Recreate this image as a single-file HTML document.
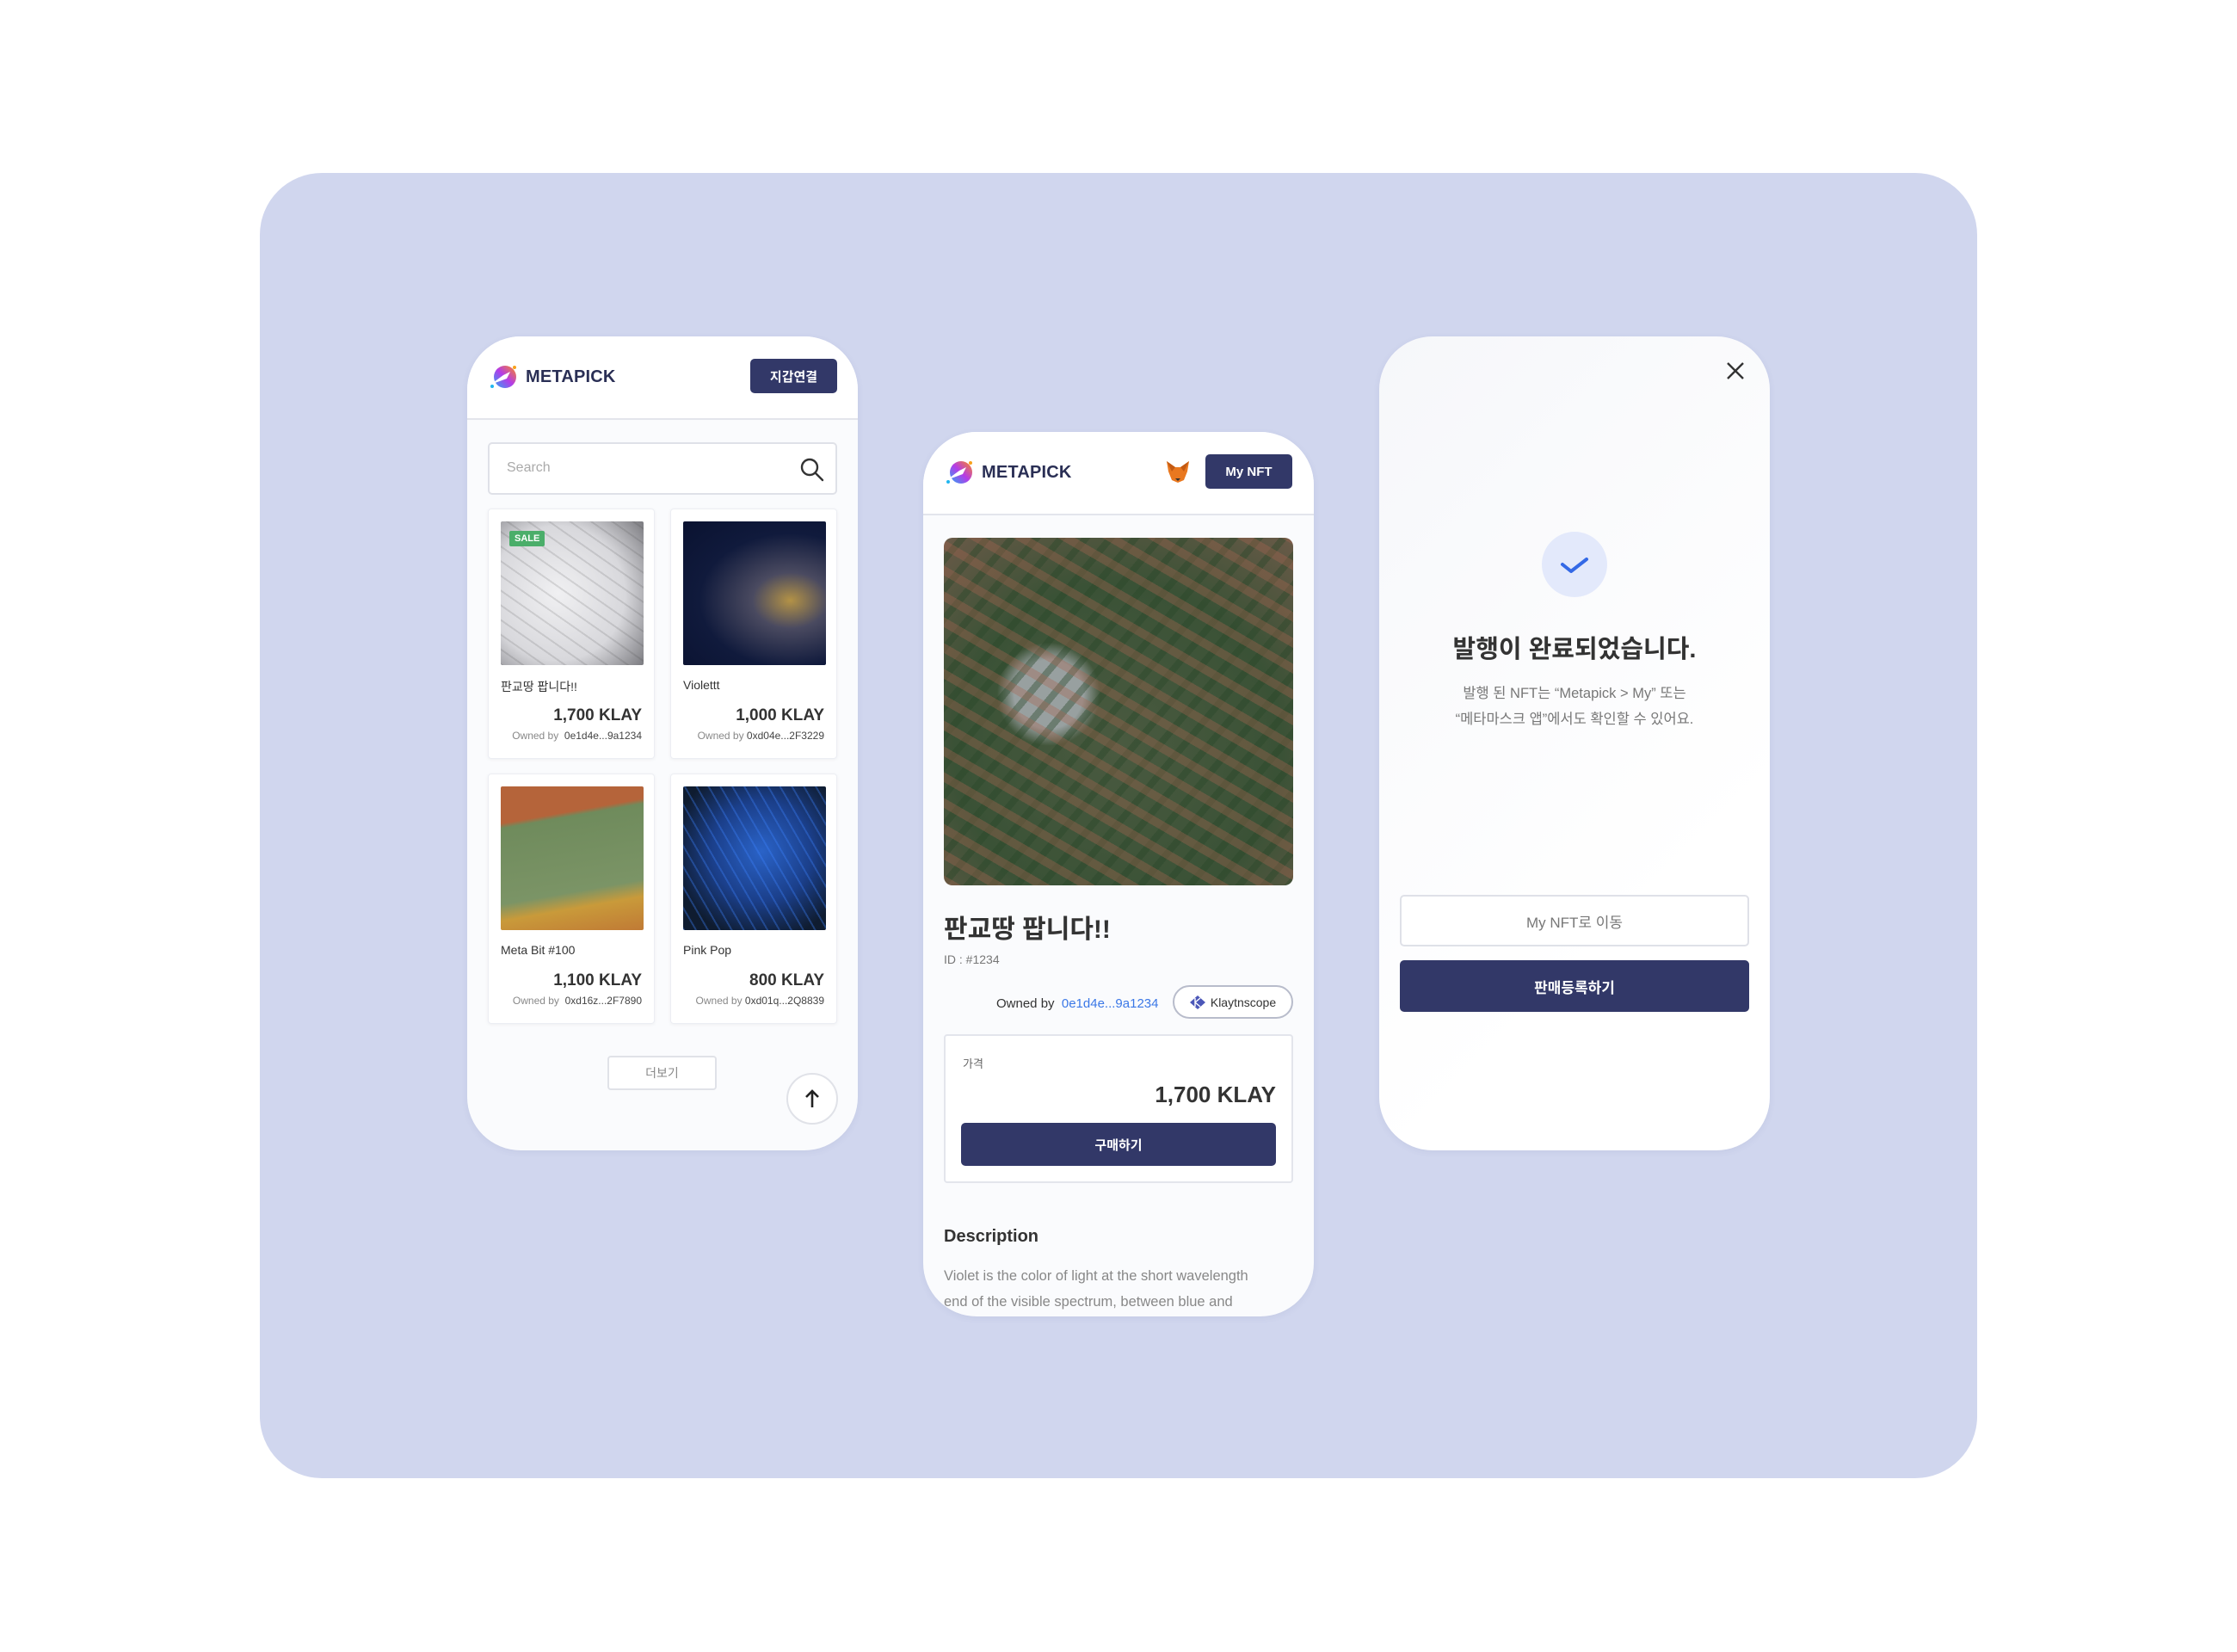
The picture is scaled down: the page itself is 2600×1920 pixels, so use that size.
<!DOCTYPE html>
<html><head><meta charset="utf-8"><style>
*{box-sizing:border-box;margin:0;padding:0}
body{width:2600px;height:1920px;background:#fff;position:relative;overflow:hidden;font-family:"Liberation Sans","Noto Sans CJK KR",sans-serif;color:#222}
.abs{position:absolute}
.bg{left:302px;top:201px;width:1996px;height:1517px;border-radius:72px;background:#d0d6ee}
.phone{position:absolute;background:#fafbfd;border-radius:62px;overflow:hidden;box-shadow:0 2px 8px rgba(80,90,140,.08)}
.hdr{position:absolute;left:0;top:0;width:100%;background:#fff;border-bottom:2px solid #e3e5ec}
.logo{position:absolute;display:flex;align-items:center;gap:8px;font-weight:700;font-size:20px;color:#2a2f55;letter-spacing:.2px}
.btn{position:absolute;background:#323868;color:#fff;border-radius:5px;font-weight:700;display:flex;align-items:center;justify-content:center}
.card{position:absolute;width:194px;height:291px;background:#fff;border:1px solid #eceef3;border-radius:4px;box-shadow:0 1px 4px rgba(0,0,0,.05)}
.card .img{position:absolute;left:14px;top:14px;width:166px;height:167px;border-radius:2px}
.card .t{position:absolute;left:14px;top:196px;font-size:14px;color:#333}
.card .p{position:absolute;right:14px;top:229px;font-size:19px;font-weight:700;color:#333}
.card .o{position:absolute;right:14px;top:256px;font-size:12px;color:#444;white-space:nowrap}
.card .o span{color:#888}
</style></head><body>
<div class="abs bg"></div>

<!-- LEFT PHONE -->
<div class="phone" style="left:543px;top:391px;width:454px;height:946px">
  <div class="hdr" style="height:97px"></div>
  <div class="logo" style="left:24px;top:32px">
    <svg width="36" height="30" viewBox="0 0 36 30"><defs><linearGradient id="g1" x1="0" y1="1" x2="1" y2="0"><stop offset="0" stop-color="#2aa8f5"/><stop offset=".5" stop-color="#b43be8"/><stop offset="1" stop-color="#ff8a1a"/></linearGradient></defs><circle cx="20" cy="15" r="13" fill="url(#g1)"/><path d="M3 24 L18 13 L26 9 L22 17 Z" fill="#fff"/><circle cx="31" cy="4" r="2" fill="#f8a21b"/><circle cx="5" cy="26" r="2" fill="#20b6f0"/></svg>
    <span>METAPICK</span>
  </div>
  <div class="btn" style="left:329px;top:26px;width:101px;height:40px;font-size:15px">지갑연결</div>
  <div class="abs" style="left:24px;top:123px;width:406px;height:61px;background:#fff;border:2px solid #dfe1e8;border-radius:5px">
    <span class="abs" style="left:20px;top:19px;font-size:16px;color:#aaa">Search</span>
    <svg class="abs" style="left:360px;top:15px" width="30" height="30" viewBox="0 0 30 30"><circle cx="12" cy="12" r="9" fill="none" stroke="#333" stroke-width="2.4"/><path d="M19 19 L27 27" stroke="#333" stroke-width="2.4" stroke-linecap="round"/></svg>
  </div>
  <div class="card" style="left:24px;top:200px">
    <div class="img" style="background:repeating-linear-gradient(35deg,rgba(60,60,60,.15) 0 2px,transparent 2px 14px),radial-gradient(circle at 40% 50%,#f0f0f2,#d8d8dc 60%,#7b7b80);"></div>
    <div class="abs" style="left:24px;top:25px;background:#4bae6a;color:#fff;font-size:11px;font-weight:700;padding:3px 6px;border-radius:2px">SALE</div>
    <div class="t">판교땅 팝니다!!</div><div class="p">1,700 KLAY</div><div class="o"><span>Owned by</span>&nbsp; 0e1d4e...9a1234</div>
  </div>
  <div class="card" style="left:236px;top:200px">
    <div class="img" style="background:radial-gradient(ellipse at 75% 55%,#b39246 0%,#4a4a60 25%,#101a3c 60%,#0a1230)"></div>
    <div class="t">Violettt</div><div class="p">1,000 KLAY</div><div class="o"><span>Owned by</span> 0xd04e...2F3229</div>
  </div>
  <div class="card" style="left:24px;top:508px">
    <div class="img" style="background:linear-gradient(170deg,#b5643a 0%,#b5643a 22%,#6f8b5c 25%,#7b9466 70%,#c99a3a 80%,#c07a35)"></div>
    <div class="t">Meta Bit #100</div><div class="p">1,100 KLAY</div><div class="o"><span>Owned by</span>&nbsp; 0xd16z...2F7890</div>
  </div>
  <div class="card" style="left:236px;top:508px">
    <div class="img" style="background:repeating-linear-gradient(60deg,rgba(60,130,255,.35) 0 2px,transparent 2px 12px),radial-gradient(circle at 55% 45%,#2a63c8,#1b3f8a 45%,#0f1c30 80%)"></div>
    <div class="t">Pink Pop</div><div class="p">800 KLAY</div><div class="o"><span>Owned by</span> 0xd01q...2Q8839</div>
  </div>
  <div class="abs" style="left:163px;top:836px;width:127px;height:40px;border:2px solid #e0e2e8;border-radius:4px;background:#fff;font-size:14px;color:#888;display:flex;align-items:center;justify-content:center">더보기</div>
  <div class="abs" style="left:371px;top:856px;width:60px;height:60px;border:2px solid #e0e2e8;border-radius:50%;background:#fff">
    <svg class="abs" style="left:18px;top:16px" width="20" height="24" viewBox="0 0 20 24"><path d="M10 22 V3 M3 10 L10 3 L17 10" fill="none" stroke="#222" stroke-width="2.6"/></svg>
  </div>
</div>

<!-- MIDDLE PHONE -->
<div class="phone" style="left:1073px;top:502px;width:454px;height:1028px">
  <div class="hdr" style="height:97px"></div>
  <div class="logo" style="left:24px;top:32px">
    <svg width="36" height="30" viewBox="0 0 36 30"><defs><linearGradient id="g2" x1="0" y1="1" x2="1" y2="0"><stop offset="0" stop-color="#2aa8f5"/><stop offset=".5" stop-color="#b43be8"/><stop offset="1" stop-color="#ff8a1a"/></linearGradient></defs><circle cx="20" cy="15" r="13" fill="url(#g2)"/><path d="M3 24 L18 13 L26 9 L22 17 Z" fill="#fff"/><circle cx="31" cy="4" r="2" fill="#f8a21b"/><circle cx="5" cy="26" r="2" fill="#20b6f0"/></svg>
    <span>METAPICK</span>
  </div>
  <svg class="abs" style="left:281px;top:32px" width="30" height="28" viewBox="0 0 30 28"><path d="M2 2 L12 9 H18 L28 2 L26 14 L22 24 L15 27 L8 24 L4 14 Z" fill="#e9781f"/><path d="M2 2 L12 9 L8 14 Z M28 2 L18 9 L22 14 Z" fill="#c45a12"/><path d="M12 22 L15 25 L18 22 Z" fill="#333"/></svg>
  <div class="btn" style="left:328px;top:26px;width:101px;height:40px;font-size:15px">My NFT</div>
  <div class="abs" style="left:24px;top:123px;width:406px;height:404px;border-radius:10px;background:
    repeating-linear-gradient(30deg,rgba(170,100,80,.35) 0 10px,transparent 10px 26px),
    repeating-linear-gradient(-50deg,rgba(40,70,40,.4) 0 8px,transparent 8px 22px),
    radial-gradient(circle at 30% 45%,#98a0a0 0 40px,transparent 60px),
    radial-gradient(circle at 50% 60%,#4a5a40,#3a5236 60%,#6a5a48)"></div>
  <div class="abs" style="left:24px;top:553px;font-size:30px;font-weight:700;color:#333">판교땅 팝니다!!</div>
  <div class="abs" style="left:24px;top:605px;font-size:14px;color:#777">ID : #1234</div>
  <div class="abs" style="left:85px;top:656px;font-size:15px;color:#333;white-space:nowrap">Owned by &nbsp;<span style="color:#3b78e7">0e1d4e...9a1234</span></div>
  <div class="abs" style="left:290px;top:643px;width:140px;height:39px;border:2px solid #b8bccb;border-radius:20px;background:#fff;font-size:14px;color:#333;display:flex;align-items:center;justify-content:center;gap:6px"><svg width="18" height="16" viewBox="0 0 18 16"><path d="M9 0 L18 8 L9 16 L0 8 Z" fill="#4b57b8"/><path d="M6 3 V13 M6 8 L12 3 M6 8 L12 13" stroke="#fff" stroke-width="1.4"/></svg>Klaytnscope</div>
  <div class="abs" style="left:24px;top:700px;width:406px;height:173px;background:#fff;border:2px solid #e3e5ec;border-radius:4px">
    <span class="abs" style="left:20px;top:22px;font-size:13px;color:#666">가격</span>
    <span class="abs" style="right:18px;top:53px;font-size:26px;font-weight:700;color:#333">1,700 KLAY</span>
    <div class="btn" style="left:18px;top:101px;width:366px;height:50px;font-size:15px">구매하기</div>
  </div>
  <div class="abs" style="left:24px;top:924px;font-size:20px;font-weight:700;color:#333">Description</div>
  <div class="abs" style="left:24px;top:966px;width:385px;font-size:16.5px;line-height:30px;color:#888">Violet is the color of light at the short wavelength end of the visible spectrum, between blue and</div>
</div>

<!-- RIGHT PHONE -->
<div class="phone" style="left:1603px;top:391px;width:454px;height:946px;background:linear-gradient(135deg,#f6f7fa,#ffffff 70%)">
  <svg class="abs" style="left:402px;top:28px" width="24" height="24" viewBox="0 0 24 24"><path d="M3 3 L21 21 M21 3 L3 21" stroke="#333" stroke-width="2.4"/></svg>
  <div class="abs" style="left:189px;top:227px;width:76px;height:76px;border-radius:50%;background:#e3e9fb">
    <svg class="abs" style="left:20px;top:24px" width="36" height="28" viewBox="0 0 36 28"><path d="M4 14 L14 22 L32 8" fill="none" stroke="#3469e6" stroke-width="4" stroke-linecap="round" stroke-linejoin="round"/></svg>
  </div>
  <div class="abs" style="left:0;top:340px;width:454px;text-align:center;font-size:29px;font-weight:700;color:#333">발행이 완료되었습니다.</div>
  <div class="abs" style="left:0;top:400px;width:454px;text-align:center;font-size:16.5px;line-height:30px;color:#777">발행 된 NFT는 “Metapick &gt; My” 또는<br>“메타마스크 앱”에서도 확인할 수 있어요.</div>
  <div class="abs" style="left:24px;top:649px;width:406px;height:60px;border:2px solid #dfe1e8;border-radius:5px;background:#fff;font-size:17px;color:#777;display:flex;align-items:center;justify-content:center">My NFT로 이동</div>
  <div class="btn" style="left:24px;top:725px;width:406px;height:60px;font-size:17px">판매등록하기</div>
</div>
</body></html>
